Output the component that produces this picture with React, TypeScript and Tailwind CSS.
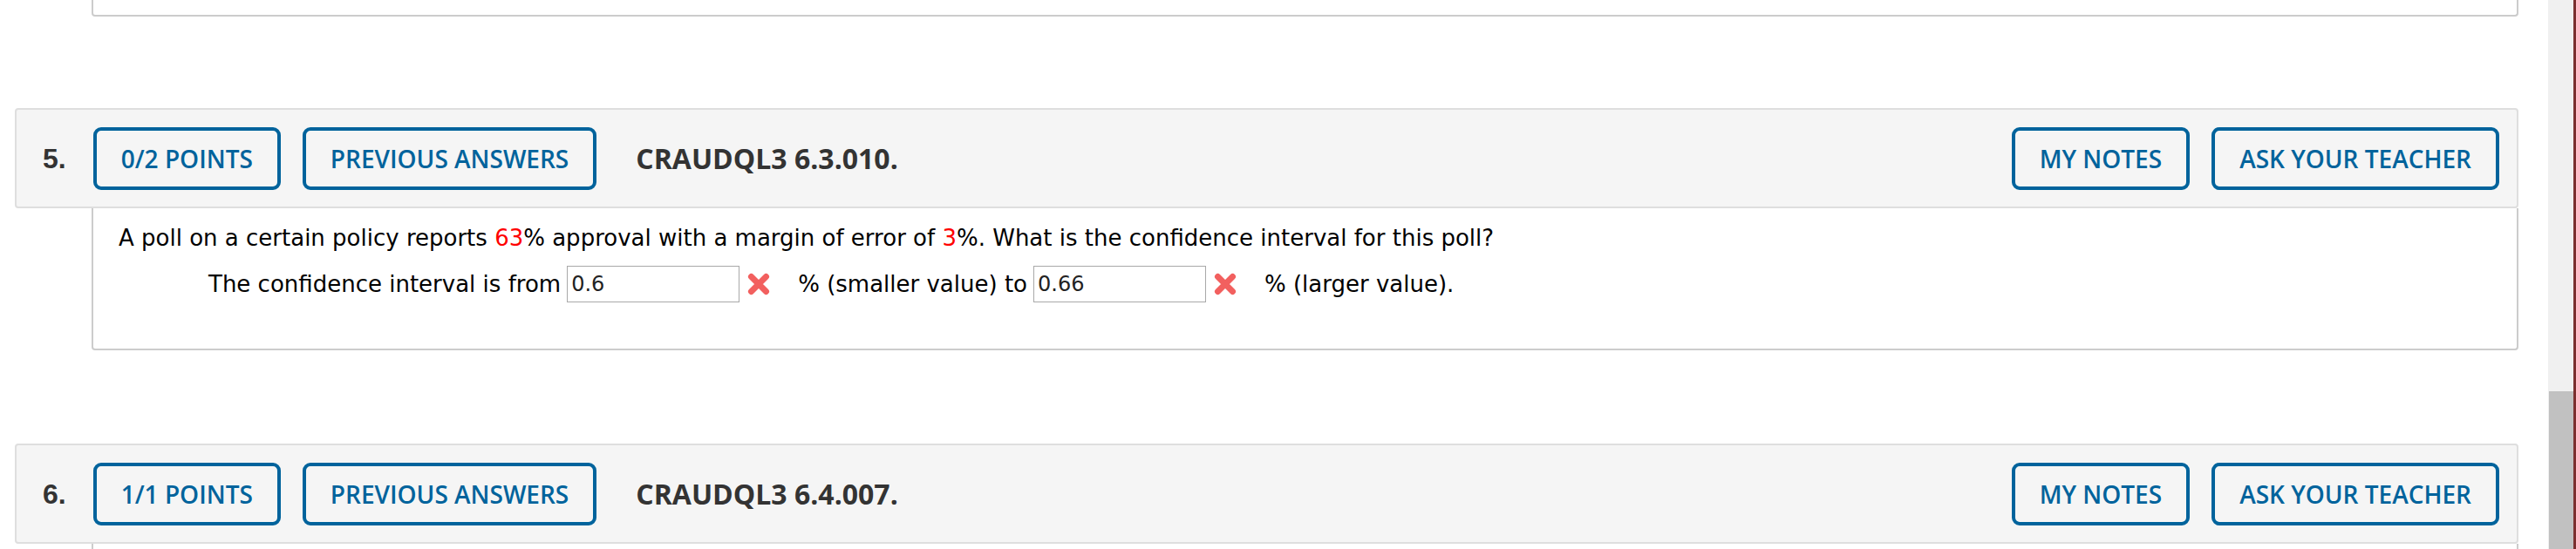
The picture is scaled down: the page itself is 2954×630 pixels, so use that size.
// Two question blocks from an online homework page (header bar + answer box).

const XMark = () => (
  <svg width="26" height="26" viewBox="0 0 26 26" className="shrink-0">
    <path
      d="M4.5 4.5 L21.5 21.5 M21.5 4.5 L4.5 21.5"
      stroke="#f2605f"
      strokeWidth="7"
      strokeLinecap="round"
    />
  </svg>
);

function OutlineButton({ label }: { label: string }) {
  return (
    <button
      type="button"
      className="flex h-[72px] shrink-0 items-center rounded-[9px] border-[4px] border-[#00639c] px-[28px] font-['Open_Sans',sans-serif] text-[28px] font-semibold text-[#00639c]"
    >
      {label}
    </button>
  );
}

function QuestionHeader({
  num,
  points,
  code,
}: {
  num: string;
  points: string;
  code: string;
}) {
  return (
    <div className="ml-[17px] mr-[34px] flex h-[115px] shrink-0 items-center rounded-[4px] border-2 border-[#dedede] bg-[#f5f5f5] pl-[30px] pr-[20px]">
      <span className="mr-[31px] font-['Liberation_Sans',sans-serif] text-[32px] font-bold text-[#333]">
        {num}
      </span>
      <OutlineButton label={points} />
      <div className="ml-[25px]">
        <OutlineButton label="PREVIOUS ANSWERS" />
      </div>
      <span className="ml-[45px] font-['Open_Sans',sans-serif] text-[32px] font-bold text-[#333]">
        {code}
      </span>
      <div className="ml-auto flex gap-[25px]">
        <OutlineButton label="MY NOTES" />
        <OutlineButton label="ASK YOUR TEACHER" />
      </div>
    </div>
  );
}

function AnswerInput({ value }: { value: string }) {
  return (
    <div className="flex h-[42px] w-[198px] shrink-0 items-center border border-[#a9a9a9] bg-white px-[4px] text-[24px] text-[#222]">
      {value}
    </div>
  );
}

export default function App() {
  return (
    <div className="flex h-[630px] w-full overflow-hidden bg-white">
      <main className="flex min-w-0 flex-1 flex-col">
        {/* bottom edge of the previous question */}
        <div className="ml-[105px] mr-[34px] h-[19px] shrink-0 rounded-b-[4px] border-x-2 border-b-2 border-[#ccc]" />

        <div className="mt-[105px]">
          <QuestionHeader num="5." points="0/2 POINTS" code="CRAUDQL3 6.3.010." />
        </div>

        <div className="ml-[105px] mr-[34px] h-[163px] shrink-0 rounded-b-[4px] border-x-2 border-b-2 border-[#ccc] pl-[29px] pt-[19px] font-['DejaVu_Sans',sans-serif] text-[26px] text-black">
          <p className="leading-[30px]">
            A poll on a certain policy reports <span className="text-[#f00]">63</span>% approval with a
            margin of error of <span className="text-[#f00]">3</span>%. What is the confidence interval
            for this poll?
          </p>
          <div className="mt-[17px] flex items-center pl-[103px]">
            <span className="mr-[7px]">The confidence interval is from</span>
            <AnswerInput value="0.6" />
            <span className="ml-[9px] mr-[32px]">
              <XMark />
            </span>
            <span className="mr-[7px]">% (smaller value) to</span>
            <AnswerInput value="0.66" />
            <span className="ml-[9px] mr-[32px]">
              <XMark />
            </span>
            <span>% (larger value).</span>
          </div>
        </div>

        <div className="mt-[107px]">
          <QuestionHeader num="6." points="1/1 POINTS" code="CRAUDQL3 6.4.007." />
        </div>
        <div className="ml-[105px] mr-[34px] h-[40px] shrink-0 border-x-2 border-[#ccc]" />
      </main>

      {/* browser scrollbar */}
      <div className="flex w-[29px] shrink-0 flex-col bg-[#f0f0f0]">
        <div className="h-[449px] shrink-0" />
        <div className="ml-[1px] flex-1 bg-[#c1c1c1]" />
      </div>
      <div className="w-[3px] shrink-0 bg-[#7b2f2f]" />
    </div>
  );
}
